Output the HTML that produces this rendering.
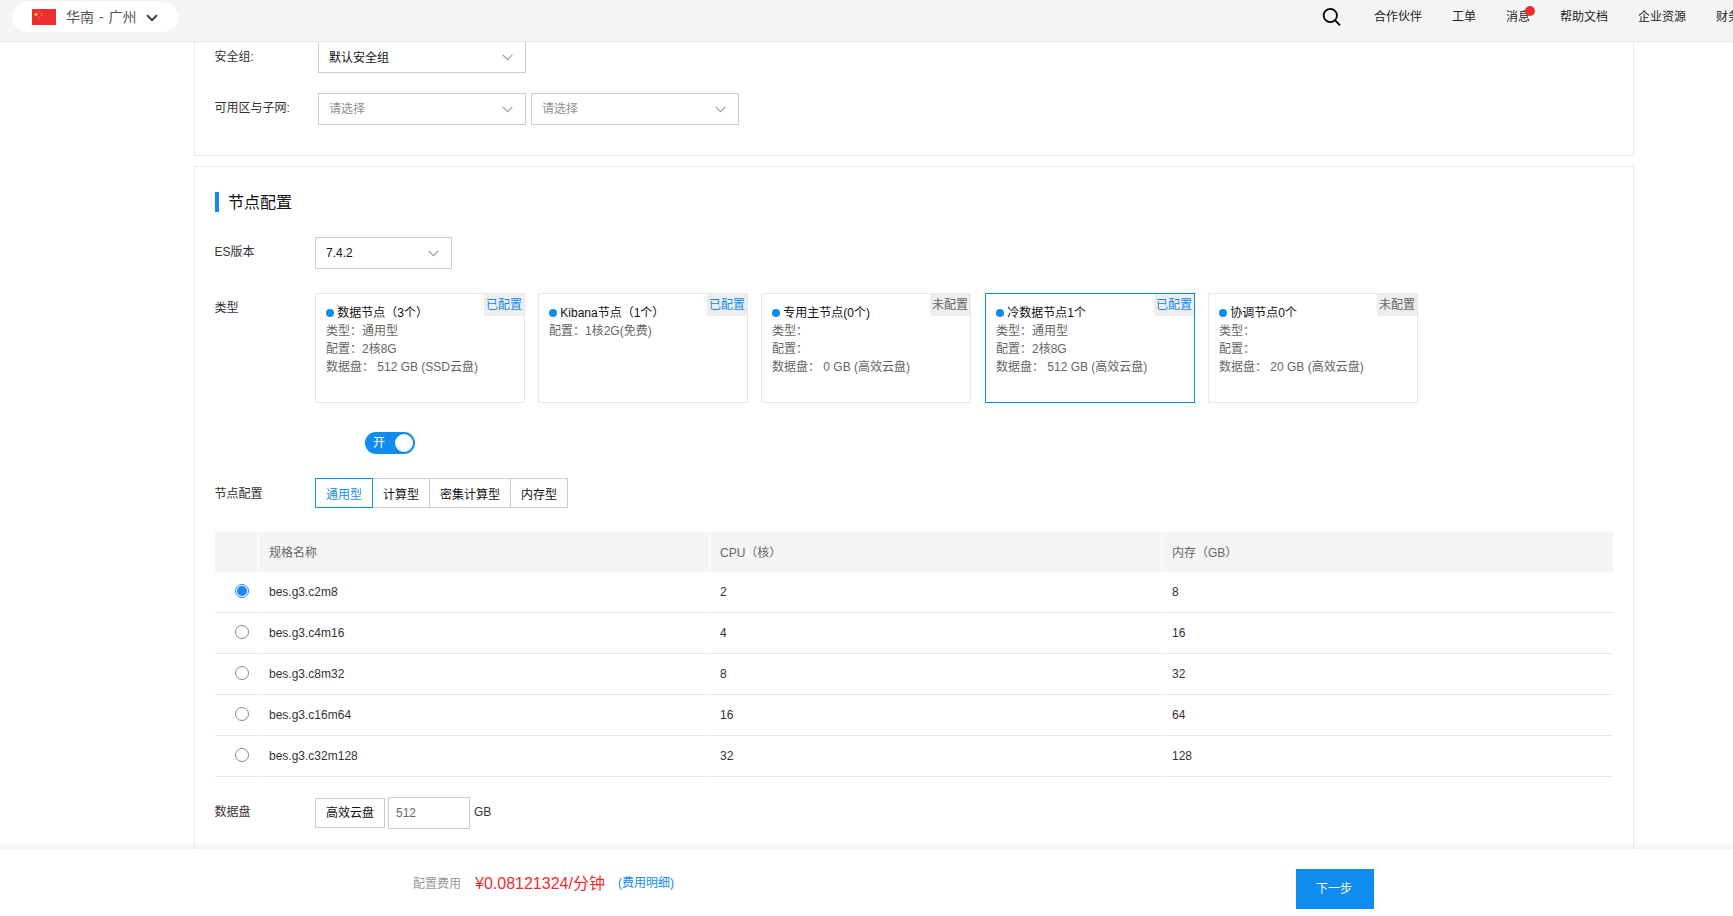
<!DOCTYPE html>
<html lang="zh-CN">
<head>
<meta charset="utf-8">
<title>节点配置</title>
<style>
*{box-sizing:border-box;margin:0;padding:0}
html,body{width:1733px;height:916px;overflow:hidden;background:#fff}
body{font-family:"Liberation Sans","Noto Sans CJK SC",sans-serif;font-size:12px;color:#333;position:relative}
.abs{position:absolute;white-space:nowrap}
#top{position:absolute;left:0;top:0;width:1733px;height:42px;background:#f5f5f5;border-bottom:1px solid #e4e8ee;z-index:5}
#pill{position:absolute;left:12px;top:2px;width:166px;height:30px;border-radius:15px;background:#fff}
#flag{position:absolute;left:20px;top:7px;width:24px;height:16px;background:#ee2e31}
#pill .t{position:absolute;left:54px;top:0;line-height:30px;font-size:14px;color:#555;word-spacing:1px}
.nav{position:absolute;top:0;line-height:35px;font-size:12px;color:#222;white-space:nowrap}
#panel1{position:absolute;left:194px;top:0;width:1440px;height:156px;border:1px solid #ebebeb;background:#fff}
#panel2{position:absolute;left:194px;top:166px;width:1440px;height:800px;border:1px solid #ebebeb;background:#fff}
.lbl{position:absolute;left:214.5px;font-size:12px;color:#333;line-height:16px;white-space:nowrap}
.sel{position:absolute;height:32px;border:1px solid #ccc;background:#fff;font-size:12px;line-height:30px;padding-left:10px;color:#111}
.sel.ph{color:#8f8f8f;line-height:31px}
.sel svg{position:absolute;right:12.5px;top:11.5px}
.card{position:absolute;top:293px;width:210px;height:110px;border:1px solid #e8e8e8;background:#fff;font-size:12px;line-height:18px;color:#666;padding:10px 0 0 10px;white-space:nowrap}
.card.on{border-color:#108cee}
.card b{font-weight:normal;color:#111}
.card i{display:inline-block;width:8px;height:8px;border-radius:50%;background:#108cee;margin-left:0;margin-right:3.3px;vertical-align:0;position:relative;top:-.3px}
.card .tag{position:absolute;right:0;top:0;height:22px;width:40px;line-height:23px;text-align:center;background:#eee;color:#666;font-size:12px}
.card .tag.y{color:#108cee}
.tab{position:absolute;top:478px;height:30px;border:1px solid #ccc;line-height:32px;text-align:center;font-size:12px;color:#111;background:#fff}
.tab.on{border-color:#108cee;color:#108cee;z-index:2}
#th{position:absolute;left:215px;top:532px;width:1398px;height:40px;background:#f5f5f5}
.th{position:absolute;top:532px;line-height:42px;font-size:12px;color:#666}
.vsep{position:absolute;top:532px;width:1px;height:246px;background:#fff}
.row{position:absolute;left:215px;width:1398px;height:1px;background:#e8e8e8}
.td{position:absolute;line-height:16px;font-size:12px;color:#333;white-space:nowrap}
.radio{position:absolute;left:235px;width:14px;height:14px;border-radius:50%;border:1px solid #888;background:#fff}
.radio.on{border:1.3px solid #1a88f0}
.radio.on:after{content:"";position:absolute;left:.7px;top:.7px;width:10px;height:10px;border-radius:50%;background:#1a88f0}
#foot{position:absolute;left:0;top:849px;width:1733px;height:67px;background:#fff;z-index:6}
#foot:before{content:"";position:absolute;left:0;top:-8px;width:100%;height:8px;background:linear-gradient(to bottom,rgba(0,0,0,0),rgba(0,0,0,.045))}
</style>
</head>
<body>
<div id="panel1"></div>
<div id="panel2"></div>

<div id="top">
  <div id="pill"><div id="flag"><svg width="24" height="16" viewBox="0 0 24 16" style="position:absolute;left:0;top:0"><circle cx="4" cy="5.3" r="1.6" fill="#fbd02c"/><circle cx="7.8" cy="2.6" r=".65" fill="#f6a42e"/><circle cx="9.6" cy="4.4" r=".65" fill="#f6a42e"/><circle cx="9.6" cy="6.5" r=".65" fill="#f6a42e"/><circle cx="7.8" cy="8.3" r=".65" fill="#f6a42e"/></svg></div><div class="t">华南 - 广州</div>
  <svg width="12" height="8" viewBox="0 0 12 8" style="position:absolute;left:134.4px;top:11.7px"><path d="M1 1.2 L6 6.2 L11 1.2" fill="none" stroke="#333" stroke-width="1.9"/></svg></div>
  <svg width="20" height="20" viewBox="0 0 20 20" style="position:absolute;left:1322px;top:7px"><circle cx="8.3" cy="8.5" r="6.65" fill="none" stroke="#000" stroke-width="1.8"/><path d="M12.9 13.1 L18 18.3" stroke="#000" stroke-width="1.9"/></svg>
  <div class="nav" style="left:1374px">合作伙伴</div>
  <div class="nav" style="left:1452px">工单</div>
  <div class="nav" style="left:1506px">消息</div>
  <div style="position:absolute;left:1525px;top:6px;width:10px;height:10px;border-radius:50%;background:#ea2e2e"></div>
  <div class="nav" style="left:1560px">帮助文档</div>
  <div class="nav" style="left:1638px">企业资源</div>
  <div class="nav" style="left:1716px">财务</div>
</div>

<div class="lbl" style="top:49px">安全组:</div>
<div class="sel" style="left:318px;top:41px;width:208px;line-height:33px">默认安全组<svg width="11" height="7" viewBox="0 0 11 7"><path d="M.7 .9 L5.5 5.7 L10.3 .9" fill="none" stroke="#999" stroke-width="1.1"/></svg></div>
<div class="lbl" style="top:100px">可用区与子网:</div>
<div class="sel ph" style="left:318px;top:93px;width:208px">请选择<svg width="11" height="7" viewBox="0 0 11 7"><path d="M.7 .9 L5.5 5.7 L10.3 .9" fill="none" stroke="#999" stroke-width="1.1"/></svg></div>
<div class="sel ph" style="left:531px;top:93px;width:208px">请选择<svg width="11" height="7" viewBox="0 0 11 7"><path d="M.7 .9 L5.5 5.7 L10.3 .9" fill="none" stroke="#999" stroke-width="1.1"/></svg></div>

<div style="position:absolute;left:215px;top:192px;width:4px;height:20px;background:#108cee"></div>
<div class="abs" style="left:228px;top:191px;font-size:16px;line-height:24px;color:#111">节点配置</div>

<div class="lbl" style="top:244px">ES版本</div>
<div class="sel" style="left:315px;top:237px;width:137px">7.4.2<svg width="11" height="7" viewBox="0 0 11 7"><path d="M.7 .9 L5.5 5.7 L10.3 .9" fill="none" stroke="#999" stroke-width="1.1"/></svg></div>

<div class="lbl" style="top:300px">类型</div>
<div class="card" style="left:315px"><b><i></i>数据节点（3个）</b><br>类型：通用型<br>配置：2核8G<br>数据盘： 512 GB (SSD云盘)<div class="tag y">已配置</div></div>
<div class="card" style="left:538px"><b><i></i>Kibana节点（1个）</b><br>配置：1核2G(免费)<div class="tag y">已配置</div></div>
<div class="card" style="left:761px"><b><i></i>专用主节点(0个)</b><br>类型：<br>配置：<br>数据盘： 0 GB (高效云盘)<div class="tag">未配置</div></div>
<div class="card on" style="left:985px"><b><i></i>冷数据节点1个</b><br>类型：通用型<br>配置：2核8G<br>数据盘： 512 GB (高效云盘)<div class="tag y">已配置</div></div>
<div class="card" style="left:1208px"><b><i></i>协调节点0个</b><br>类型：<br>配置：<br>数据盘： 20 GB (高效云盘)<div class="tag">未配置</div></div>

<div style="position:absolute;left:365px;top:432px;width:50px;height:22px;border-radius:11px;background:#108cee"></div>
<div style="position:absolute;left:395px;top:434px;width:18px;height:18px;border-radius:50%;background:#fff"></div>
<div class="abs" style="left:373px;top:432px;line-height:22px;color:#fff;font-size:12px">开</div>

<div class="lbl" style="top:486px">节点配置</div>
<div class="tab on" style="left:315px;width:58px">通用型</div>
<div class="tab" style="left:372px;width:58px">计算型</div>
<div class="tab" style="left:429px;width:82px">密集计算型</div>
<div class="tab" style="left:510px;width:58px">内存型</div>

<div id="th"></div>
<div class="th" style="left:269px">规格名称</div>
<div class="th" style="left:720px">CPU（核）</div>
<div class="th" style="left:1172px">内存（GB）</div>

<div class="row" style="top:612px"></div>
<div class="row" style="top:653px"></div>
<div class="row" style="top:694px"></div>
<div class="row" style="top:735px"></div>
<div class="row" style="top:776px"></div>
<div class="vsep" style="left:258px"></div>
<div class="vsep" style="left:709px"></div>
<div class="vsep" style="left:1161px"></div>

<div class="radio on" style="top:584px"></div>
<div class="radio" style="top:625px"></div>
<div class="radio" style="top:666px"></div>
<div class="radio" style="top:707px"></div>
<div class="radio" style="top:748px"></div>

<div class="td" style="left:269px;top:584px">bes.g3.c2m8</div><div class="td" style="left:720px;top:584px">2</div><div class="td" style="left:1172px;top:584px">8</div>
<div class="td" style="left:269px;top:625px">bes.g3.c4m16</div><div class="td" style="left:720px;top:625px">4</div><div class="td" style="left:1172px;top:625px">16</div>
<div class="td" style="left:269px;top:666px">bes.g3.c8m32</div><div class="td" style="left:720px;top:666px">8</div><div class="td" style="left:1172px;top:666px">32</div>
<div class="td" style="left:269px;top:707px">bes.g3.c16m64</div><div class="td" style="left:720px;top:707px">16</div><div class="td" style="left:1172px;top:707px">64</div>
<div class="td" style="left:269px;top:748px">bes.g3.c32m128</div><div class="td" style="left:720px;top:748px">32</div><div class="td" style="left:1172px;top:748px">128</div>

<div class="lbl" style="top:804px">数据盘</div>
<div class="tab" style="left:315px;top:798px;width:70px;height:30px;line-height:29px">高效云盘</div>
<div class="sel" style="left:388px;top:797px;width:82px;padding-left:7px;color:#666">512</div>
<div class="abs" style="left:474px;top:804px;line-height:16px;color:#333">GB</div>

<div id="foot">
  <div class="abs" style="left:413px;top:27px;font-size:12px;line-height:17px;color:#999">配置费用</div>
  <div class="abs" style="left:475px;top:22px;font-size:16px;line-height:25px;color:#ea2e2e">¥0.08121324/分钟</div>
  <div class="abs" style="left:618px;top:25px;font-size:12px;line-height:19px;color:#108cee">(费用明细)</div>
  <div style="position:absolute;left:1296px;top:20px;width:78px;height:40px;background:#108cee;color:#fff;font-size:12px;line-height:40px;text-align:center;padding-right:2px">下一步</div>
</div>
</body>
</html>
